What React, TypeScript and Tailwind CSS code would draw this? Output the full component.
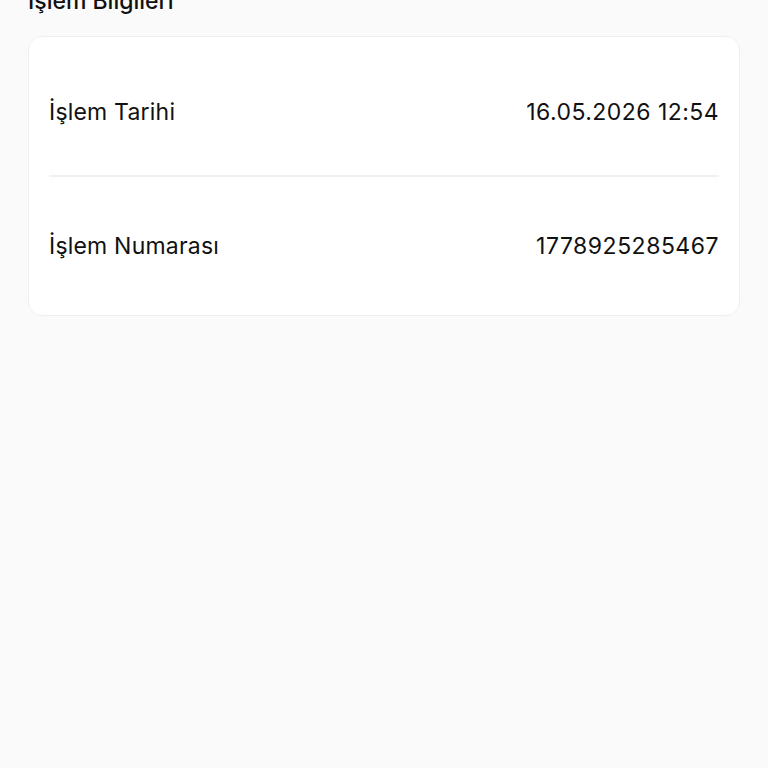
const rows = [
  { label: "İşlem Tarihi", value: "16.05.2026 12:54" },
  { label: "İşlem Numarası", value: "1778925285467" },
]

export default function App() {
  return (
    <div className="flex min-h-screen flex-col bg-[#fafafa] px-[28px] font-['Inter',sans-serif] text-[#111111]">
      <h2 className="mt-[-13px] text-[23px] leading-[28px] font-medium">İşlem Bilgileri</h2>

      <div className="mt-[21px] rounded-[14px] border border-[#efefef] bg-white px-5">
        <div className="flex items-center justify-between pt-[61px] pb-[49px] text-[23px] leading-[28px]">
          <span className="tracking-[0.2px]">{rows[0].label}</span>
          <span className="tracking-[0.45px]">{rows[0].value}</span>
        </div>
        <div className="h-[2px] bg-[#f0f0f0]" />
        <div className="flex items-center justify-between py-[55px] text-[23px] leading-[28px]">
          <span className="tracking-[0.2px]">{rows[1].label}</span>
          <span className="tracking-[0.5px]">{rows[1].value}</span>
        </div>
      </div>
    </div>
  )
}
